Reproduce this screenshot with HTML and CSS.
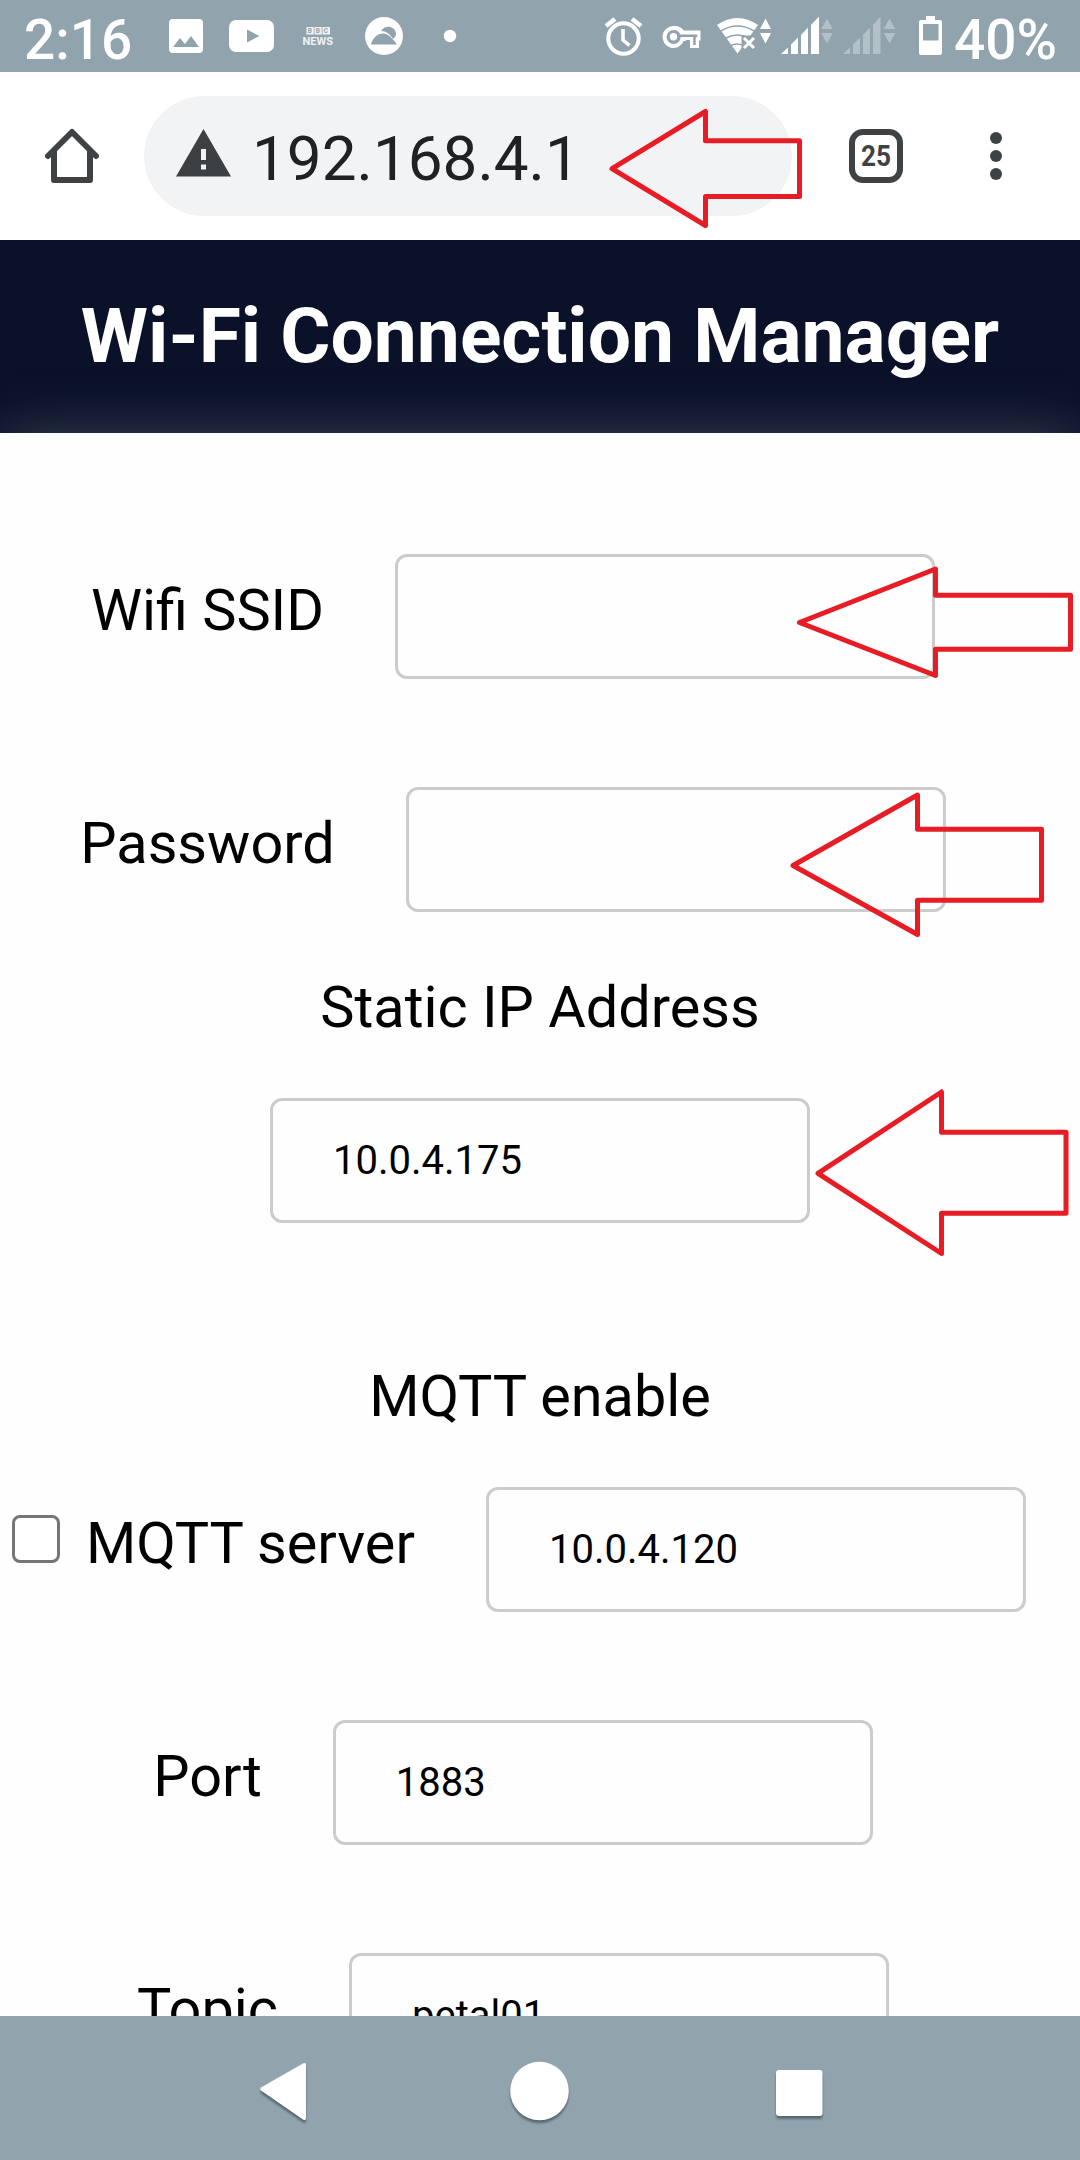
FILE: index.html
```html
<!DOCTYPE html>
<html lang="en">
<head>
<meta charset="utf-8">
<title>Wi-Fi Connection Manager</title>
<link rel="stylesheet" href="styles.css">
</head>
<body>
<div class="phone">
  <div class="status-bar">
    <span class="clock">2:16</span>
    <svg width="65" height="72" viewBox="150 0 65 72"><rect x="169" y="19" width="34" height="34" rx="4" fill="#fff"/><path class="cut" d="M173 47l7-9 5 6 6-8 8 11z"/></svg>
    <svg width="75" height="72" viewBox="215 0 75 72"><rect x="229" y="20" width="45" height="32" rx="7" fill="#fff"/><path class="cut" d="M247 29.500l12.500 6.500-12.500 6.500z"/></svg>
    <svg class="bbc" width="55" height="72" viewBox="290 0 55 72"><path d="M306.500 27h7.200v7.500h-7.200zM314.500 27h7.200v7.500h-7.200zM322.500 27h7.500v7.500h-7.500z"/><text class="bbc-letter" x="307.800" y="33.400">B</text><text class="bbc-letter" x="315.800" y="33.400">B</text><text class="bbc-letter" x="323.800" y="33.400">C</text><text class="bbc-news" x="302.500" y="45" textLength="30.500" lengthAdjust="spacingAndGlyphs">NEWS</text></svg>
    <svg width="75" height="72" viewBox="345 0 75 72"><circle cx="384" cy="36" r="19" fill="#fff"/><path class="cut" d="M371 44.500c2-8 9-13 16-10 4 2 7 6 10 10z"/><path class="cut" d="M381 31c4-7 14-5 15 2 0 3-1 4-3 6-3-5-7-8-12-8z"/></svg>
    <svg width="60" height="72" viewBox="420 0 60 72"><circle cx="450" cy="36" r="6.200" fill="#fff"/></svg>
    <div class="status-right">
      <svg width="50" height="72" viewBox="600 0 50 72" fill="none" stroke="#fff"><circle cx="623.500" cy="38.500" r="15.200" stroke-width="4"/><path stroke-width="3.600" d="M623 29v11l6.500 5.500"/><path stroke-width="4.500" d="M606 26l9-7M641 26l-9-7"/></svg>
      <svg width="60" height="72" viewBox="650 0 60 72"><path fill="#fff" fill-rule="evenodd" d="M673.500 26a11 11 0 1 0 10.200 15h2.300v-1h4v8h9v-7.500h1.500V30.500h-16.800a11 11 0 0 0-10.200-4.500zM673.500 30a7 7 0 0 1 6.800 4.500h17V37h-1.600v8h-2.500v-8h-12.600a7 7 0 1 1-7.100-7z"/><circle cx="673.500" cy="36.800" r="3.700" fill="#fff"/></svg>
      <svg width="65" height="72" viewBox="710 0 65 72"><path fill="#fff" d="M717 25q20.500-14 41 0L737.500 53.500z"/><path fill="none" stroke="#91a4ae" stroke-width="1.500" d="M720 31.500q17.500-11 35 0M726 38q11.500-6 23 0M731 45.500q6-3 12 0"/><path class="cut" d="M741.500 35.500h16v18h-16z"/><path fill="none" stroke="#fff" stroke-width="3" d="M744 38l10 10M754 38l-10 10"/><path fill="#fff" d="M765.500 18.500l5.500 10.500h-11zM765.500 43.500l5.500-10.500h-11z"/></svg>
      <svg width="60" height="72" viewBox="775 0 60 72"><path fill="#fff" d="M781 54L788 47.500V54zM791 44.500L798 37.500V54h-7zM801 35l7-7.500V54h-7zM811 25l8-8.500V54h-8z"/><path class="faint" d="M827 18.500l5.700 10.500h-11.400zM827 43.500l5.700-10.500h-11.400z"/></svg>
      <svg width="65" height="72" viewBox="835 0 65 72"><path class="faint" d="M843 54L850 47.500V54zM853 44.500L860 37.500V54h-7zM863 35l7-7.500V54h-7zM873 25l7.500-8.500V54h-7.500zM889.500 18.500l5.700 10.500h-11.400zM889.500 43.500l5.700-10.500h-11.400z"/></svg>
      <svg width="54" height="72" viewBox="900 0 54 72"><path fill="#fff" fill-rule="evenodd" d="M926 16h9v4h5q2 0 2 2v31q0 2-2 2h-19q-2 0-2-2V22q0-2 2-2h5zM923 24v16.500h15.500V24z"/></svg>
      <span class="battery">40%</span>
    </div>
  </div>

  <div class="toolbar">
    <svg width="144" height="168" viewBox="0 72 144 168" fill="none" stroke="#3f4245" stroke-width="6" stroke-linecap="round" stroke-linejoin="round"><path d="M48 156l24-24 24 24M54 152v28h36v-28"/></svg>
    <div class="address">
      <svg class="warn" width="55" height="48" viewBox="0 0 55 48"><path fill="#3c4043" fill-rule="evenodd" d="M27.500 0L55 47.500H0zM25 20v11h5V20zM25 35.500v5h5v-5z"/></svg>
      <span class="url">192.168.4.1</span>
    </div>
    <svg width="288" height="168" viewBox="792 72 288 168"><rect x="852" y="132" width="48" height="48" rx="11" fill="none" stroke="#3f4245" stroke-width="6"/><text class="tabs" x="861" y="166" textLength="30" lengthAdjust="spacingAndGlyphs">25</text><g fill="#3f4245"><circle cx="996" cy="138" r="6"/><circle cx="996" cy="156" r="6"/><circle cx="996" cy="174" r="6"/></g></svg>
  </div>

  <div class="page">
    <h1 class="title">Wi-Fi Connection Manager</h1>
    <form class="form">
      <div class="row"><label for="ssid">Wifi SSID</label><input class="field" id="ssid" type="text"></div>
      <div class="row"><label for="pw">Password</label><input class="field" id="pw" type="text"></div>
      <label class="heading" for="ip">Static IP Address</label>
      <input class="field" id="ip" type="text" value="10.0.4.175">
      <label class="heading second" for="mqtt">MQTT enable</label>
      <div class="row mqtt"><input class="check" id="mqtt" type="checkbox"><label for="server">MQTT server</label><input class="field" id="server" type="text" value="10.0.4.120"></div>
      <div class="row"><label for="port">Port</label><input class="field" id="port" type="text" value="1883"></div>
      <div class="row"><label for="topic">Topic</label><input class="field" id="topic" type="text" value="petal01"></div>
    </form>
  </div>

  <div class="nav-bar">
    <svg class="nav-icons" width="1080" height="144" viewBox="0 2016 1080 144" fill="#fff"><path d="M261 2090.500q-1.500-1.500 0-3L303 2063.500q3-1.500 3 1.500v53q0 3-3 1.500z"/><circle cx="539.500" cy="2091" r="29.300"/><rect x="776" y="2070" width="46.500" height="46" rx="3"/></svg>
  </div>

  <svg class="marks" width="1080" height="2160" viewBox="0 0 1080 2160">
    <path d="M612 168.700L705.500 111.500V140.700H799.500V196.500H705.500V225.500z"/>
    <path d="M799.500 622.500L935.500 569V595.300H1070.500V649.300H935.500V675.500z"/>
    <path d="M793 865.500L917.500 795V829.300H1041.500V900.300H917.500V934.500z"/>
    <path d="M818 1173.300L941.500 1092V1132.300H1066V1213.300H941.500V1253.500z"/>
  </svg>
</div>
</body>
</html>
```
FILE: styles.css
```css
* { box-sizing: border-box; }
body { margin: 0; font-family: Roboto, sans-serif; background: #fefefe; }
svg { display: block; flex: none; }

.phone { position: relative; display: flex; flex-direction: column; width: 1080px; height: 2160px; overflow: hidden; }

.status-bar { display: flex; height: 72px; flex: none; background: #91a4ae; color: #fff; }
.clock, .battery { font-size: 55px; font-weight: 500; line-height: 72px; padding-top: 4px; white-space: nowrap; }
.clock { width: 150px; padding-left: 24px; }
.status-right { display: flex; margin-left: auto; width: 480px; }
.cut { fill: #91a4ae; }
.faint { fill: #b2c0c7; }
.bbc { fill: #eef2f4; }
.bbc-letter { font-size: 6.500px; font-weight: 700; fill: #91a4ae; }
.bbc-news { font-size: 11.500px; font-weight: 700; }

.toolbar { display: flex; align-items: center; height: 168px; flex: none; background: #fff; }
.address { display: flex; align-items: center; width: 648px; height: 120px; padding-left: 32px; border-radius: 60px; background: #f1f3f4; }
.warn { margin-bottom: 7px; }
.url { margin-left: 21px; padding-top: 5px; font-size: 62px; line-height: 74px; color: #202124; }
.tabs { font-size: 30px; font-weight: 700; fill: #3f4245; }

.page { flex: 1; min-height: 0; overflow: hidden; }
.title { display: flex; align-items: center; justify-content: center; height: 193px; margin: 0; padding-bottom: 2px; background: #0a1128; color: #fff; font-size: 76.800px; font-weight: 700; white-space: nowrap; }
.form { position: relative; display: flex; flex-direction: column; align-items: center; gap: 108px; height: 1800px; padding-top: 121px; background: #fefefe; box-shadow: 0 0 54px rgba(149, 157, 165, 0.34); }
.row { display: flex; align-items: baseline; justify-content: center; width: 1080px; height: 125px; flex: none; gap: 71px; padding-right: 54px; }
label { font-size: 57.600px; line-height: 66px; color: #000; white-space: nowrap; }
.field { width: 540px; height: 125px; flex: none; margin: 0; padding: 0 60px; border: 3px solid #ccc; border-radius: 12px; background: #fefefe; color: #000; font: 40px Roboto, sans-serif; outline: none; }
.heading { margin: -45px 0 -51px; }
.heading.second { margin-top: 33px; }
.mqtt { justify-content: flex-start; padding: 0 0 0 12px; }
.check { appearance: none; width: 48px; height: 48px; flex: none; margin: 0 -45px 0 0; border: 3px solid #767676; border-radius: 8px; background: #fff; }

.nav-bar { height: 144px; flex: none; background: #91a4ae; }
.nav-icons { filter: drop-shadow(0 3px 1px rgba(50, 65, 73, 0.6)); }

.marks { position: absolute; left: 0; top: 0; fill: none; stroke: #e81c24; stroke-width: 5; stroke-linejoin: round; pointer-events: none; }
```
